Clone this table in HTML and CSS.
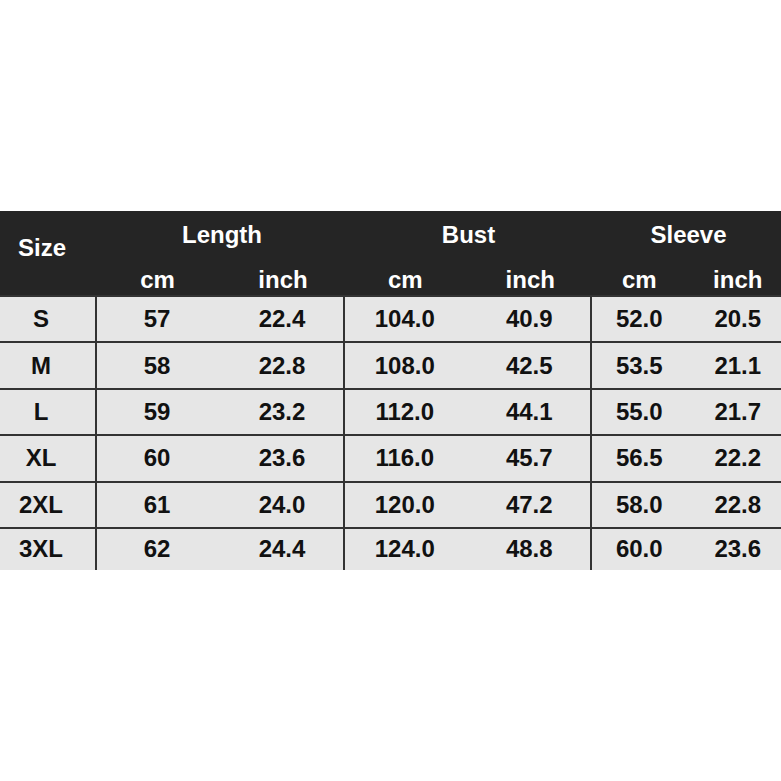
FILE: index.html
```html
<!DOCTYPE html>
<html>
<head>
<meta charset="utf-8">
<link rel="stylesheet" href="styles.css">
</head>
<body>
<div class="page">
  <div class="chart">
    <div class="head">
      <div class="h-size">Size</div>
      <div class="h-title t-len">Length</div>
      <div class="h-title t-bust">Bust</div>
      <div class="h-title t-sleeve">Sleeve</div>
      <div class="h-sub cm">cm</div>
      <div class="h-sub">inch</div>
      <div class="h-sub cm">cm</div>
      <div class="h-sub">inch</div>
      <div class="h-sub">cm</div>
      <div class="h-sub last">inch</div>
    </div>
    <div class="body">
      <div class="row"><div class="c size">S</div><div class="c cm">57</div><div class="c sep">22.4</div><div class="c cm">104.0</div><div class="c sep">40.9</div><div class="c">52.0</div><div class="c last">20.5</div></div>
      <div class="row"><div class="c size">M</div><div class="c cm">58</div><div class="c sep">22.8</div><div class="c cm">108.0</div><div class="c sep">42.5</div><div class="c">53.5</div><div class="c last">21.1</div></div>
      <div class="row"><div class="c size">L</div><div class="c cm">59</div><div class="c sep">23.2</div><div class="c cm">112.0</div><div class="c sep">44.1</div><div class="c">55.0</div><div class="c last">21.7</div></div>
      <div class="row"><div class="c size">XL</div><div class="c cm">60</div><div class="c sep">23.6</div><div class="c cm">116.0</div><div class="c sep">45.7</div><div class="c">56.5</div><div class="c last">22.2</div></div>
      <div class="row"><div class="c size">2XL</div><div class="c cm">61</div><div class="c sep">24.0</div><div class="c cm">120.0</div><div class="c sep">47.2</div><div class="c">58.0</div><div class="c last">22.8</div></div>
      <div class="row short"><div class="c size">3XL</div><div class="c cm">62</div><div class="c sep">24.4</div><div class="c cm">124.0</div><div class="c sep">48.8</div><div class="c">60.0</div><div class="c last">23.6</div></div>
    </div>
  </div>
</div>
</body>
</html>
```
FILE: styles.css
```css
html, body {
  margin: 0;
  padding: 0;
  background: #fff;
}
.page {
  width: 781px;
  height: 781px;
  display: flex;
  flex-direction: column;
  padding-top: 211px;
  box-sizing: border-box;
}
.chart {
  width: 781px;
  font-family: "Liberation Sans", Arial, sans-serif;
  font-weight: bold;
  font-size: 24px;
}
.head {
  display: grid;
  grid-template-columns: 97px 124px 124px 123.5px 123.5px 94.5px 94.5px;
  grid-template-rows: 46px 38px;
  background: #252525;
  color: #fff;
}
.h-size {
  grid-row: 1 / 3;
  grid-column: 1;
  display: flex;
  align-items: center;
  justify-content: center;
  padding-bottom: 10px;
  padding-right: 13px;
  box-sizing: border-box;
}
.h-title {
  grid-row: 1;
  display: flex;
  align-items: center;
  justify-content: center;
  padding-top: 1px;
}
.t-len { grid-column: 2 / 4; padding-left: 2px; }
.t-bust { grid-column: 4 / 6; }
.t-sleeve { grid-column: 6 / 8; padding-left: 4px; }
.h-sub {
  grid-row: 2;
  display: flex;
  align-items: flex-end;
  justify-content: center;
  line-height: 24px;
  padding-bottom: 3px;
}
.h-sub.cm { padding-right: 3px; }
.h-sub.last { padding-left: 8px; }
.body {
  background: #e6e6e6;
  color: #111;
}
.row {
  display: grid;
  grid-template-columns: 97px 124px 124px 123.5px 123.5px 94.5px 94.5px;
  height: 46.4px;
  box-sizing: border-box;
  border-top: 2px solid #333;
}
.row.short { height: 43px; }
.c {
  display: flex;
  align-items: center;
  justify-content: center;
}
.c.size {
  border-right: 2px solid #333;
  padding-right: 13px;
}
.c.cm { padding-right: 4px; }
.c.sep { border-right: 2px solid #333; }
.c.last { padding-left: 8px; }
```
